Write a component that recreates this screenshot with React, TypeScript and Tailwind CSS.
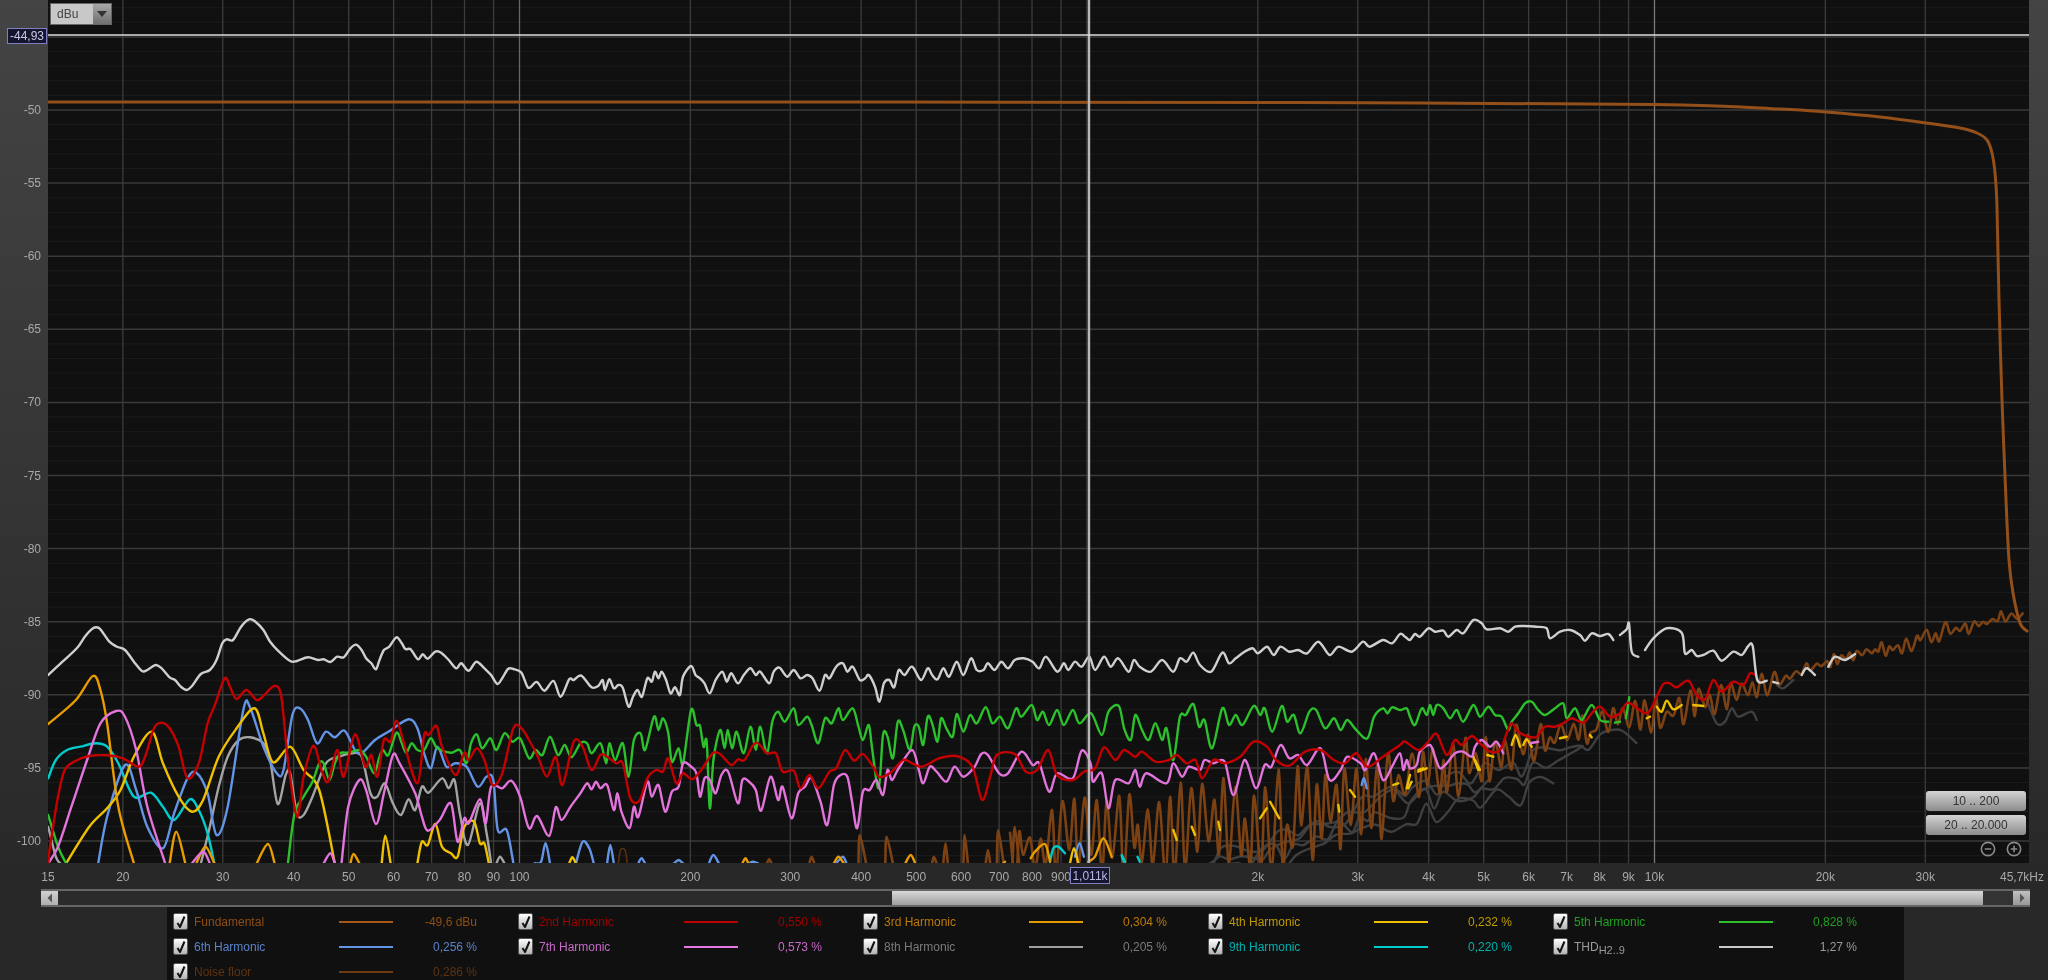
import React from "react";
import { CircleMinus, CirclePlus } from "lucide-react";

type P = [number, number];
const conv = (fx: (x: number) => number, fy: (y: number) => number) => (...n: number[]): P[] => {
  const r: P[] = [];
  for (let i = 0; i < n.length; i += 2) r.push([fx(n[i]), fy(n[i + 1])]);
  return r;
};
const z5 = conv((x) => x / 2.24, (y) => 600 + y / 3);
const z6 = conv((x) => 700 + x / 2.24, (y) => 600 + y / 3);
const z8 = conv((x) => 1000 + x / 3, (y) => 720 + y / 3);
const z9 = conv((x) => 1400 + x / 3, (y) => 610 + y / 3);

const smooth = (p: P[]) => {
  if (p.length < 2) return "";
  let d = `M${p[0][0].toFixed(1)} ${p[0][1].toFixed(1)}`;
  for (let i = 0; i < p.length - 1; i++) {
    const a = p[Math.max(i - 1, 0)], b = p[i], c = p[i + 1], e = p[Math.min(i + 2, p.length - 1)];
    const k = 0.16;
    d += `C${(b[0] + (c[0] - a[0]) * k).toFixed(1)} ${(b[1] + (c[1] - a[1]) * k).toFixed(1)} ${(c[0] - (e[0] - b[0]) * k).toFixed(1)} ${(c[1] - (e[1] - b[1]) * k).toFixed(1)} ${c[0].toFixed(1)} ${c[1].toFixed(1)}`;
  }
  return d;
};

const rng = (seed: number) => () => {
  seed = (seed * 1664525 + 1013904223) % 4294967296;
  return seed / 4294967296;
};
const interp = (t: P[], x: number) => {
  if (x <= t[0][0]) return t[0][1];
  for (let i = 0; i < t.length - 1; i++) {
    if (x <= t[i + 1][0]) {
      const f = (x - t[i][0]) / (t[i + 1][0] - t[i][0]);
      return t[i][1] + (t[i + 1][1] - t[i][1]) * f;
    }
  }
  return t[t.length - 1][1];
};

const white: P[][] = [
  [
    ...z5(108,225,140,185,172,145,190,110,205,88,215,82,225,88,245,125,262,140,280,150,300,185,318,213,330,210,348,195,362,205,380,232,392,240,405,260,418,270,430,258,450,222,470,210,485,180,498,130,508,118,522,120,540,80,558,58,572,65,590,90,605,125,625,155,650,183,665,183,690,172,712,180,725,178,740,186,755,170,770,172,785,145,798,134,810,150,820,175,832,190,842,208,850,180,860,150,872,140,888,112,900,130,908,147,920,148,936,178,947,163,958,176,975,155,988,158,1005,180,1022,205,1033,190,1050,212,1067,185,1085,205,1100,225,1114,252,1125,235,1138,207,1150,207,1168,218,1183,263,1198,248,1205,248,1220,272,1240,243,1256,290,1275,238,1285,240,1302,227,1325,262,1340,258,1350,240,1355,270,1365,238,1375,265,1385,255,1395,263,1408,320,1418,290,1428,270,1438,290,1450,235,1460,245,1467,215,1475,235,1482,215,1492,240,1502,280,1512,262,1523,285,1530,230,1548,198,1558,225),
    ...z6(0,235,10,250,22,280,35,240,50,215,60,245,70,220,85,250,98,225,113,205,125,225,135,215,155,250,165,215,178,203,195,230,210,210,225,235,240,225,252,235,268,272,280,225,290,235,305,200,320,190,330,215,342,200,358,240,370,235,378,225,392,260,402,305,412,250,424,240,435,262,445,210,458,225,475,200,495,240,510,205,520,225,532,238,545,205,558,230,575,185,590,225,607,175,620,210,635,210,645,190,660,210,675,185,690,205,705,180,725,175,745,185,760,205,775,170,800,215,815,190,825,210,840,185,855,200,872,170,885,210,905,170,920,200,937,175,960,215,972,180,985,200,1010,215,1035,180,1060,215,1075,175,1090,185,1105,158,1120,195,1145,215,1170,158,1185,190,1200,175,1220,155,1238,145,1250,160,1270,140,1285,165,1300,140,1320,155,1340,150,1360,160,1385,125,1410,165,1430,140,1460,155,1485,125,1500,140,1530,120,1550,130),
    ...z9(0,72,15,80,30,90,45,72,60,80,85,55,105,65,130,62,145,80,170,60,190,70,220,30,245,40,260,58,300,55,325,65,345,50,370,48,410,50,440,55,450,85,480,65,510,60,540,75,555,92,575,70,600,78,625,72,640,90),
  ],
  z9(660,75,680,58,687,40,695,125,715,140),
  z9(735,120,760,85,800,55,845,68,855,130,875,120,890,138,910,135,940,122,965,152,1000,125,1025,135,1045,108,1058,108,1072,210,1100,212),
  z9(1120,216,1135,220),
  z9(1205,195,1220,175,1245,195),
  z9(1285,170,1305,140,1335,150,1365,132),
];

const green: P[][] = [
  z5(108,645,130,740,148,790),
  [
    ...z5(645,790,660,640,680,590,700,545,715,490,725,490,738,540,750,490,762,460,780,458,805,450,820,470,838,520,850,470,858,450,870,465,888,398,900,430,910,458,922,430,935,450,950,450,965,415,980,445,1010,458,1030,450,1045,490,1055,430,1068,403,1080,445,1098,415,1112,450,1130,400,1148,425,1165,415,1185,475,1200,450,1215,465,1232,410,1250,465,1265,435,1280,472,1300,430,1315,430,1325,460,1345,430,1358,490,1365,430,1378,480,1395,430,1408,530,1420,420,1435,400,1445,450,1465,350,1475,390,1485,355,1497,400,1505,485,1520,445,1530,490,1548,330,1560,375),
    ...z6(0,378,8,440,15,425,22,625,30,480,45,390,55,445,62,390,72,445,82,395,98,460,113,380,125,450,135,380,150,460,162,365,175,335,190,365,210,325,220,375,240,350,250,375,265,430,280,355,295,370,310,325,320,360,342,325,355,380,365,420,378,375,385,440,400,565,410,405,420,410,432,475,443,365,455,390,470,450,480,380,490,380,500,435,510,350,520,370,532,425,540,355,552,385,566,410,575,342,590,395,605,345,620,370,640,322,655,370,672,350,690,385,708,325,720,350,743,315,755,360,768,335,782,375,800,330,815,375,835,330,850,370,876,340,900,405,915,335,938,318,950,385,965,420,975,345,990,390,1005,420,1020,370,1035,420,1045,385,1060,480,1075,350,1088,345,1105,312,1118,380,1130,360,1147,445,1170,325,1185,375,1200,345,1215,375,1240,318,1255,345,1265,325,1282,395,1303,318,1315,365,1330,345,1345,400,1365,335,1380,330,1400,385,1420,355,1435,390,1450,360,1470,390,1495,415,1510,350,1530,325,1540,340,1550,322),
    ...z9(0,300,20,295,30,320,45,345,65,295,80,315,90,285,100,315,110,285,130,295,150,325,170,300,190,335,220,285,240,320,265,290,285,315,305,320,325,360,335,335,355,310,375,280,395,275,415,300,435,315,465,295,490,280,500,325,525,295,545,330,575,285,600,330,625,335),
  ],
  z9(645,338,660,335),
  z9(678,325,688,262),
];

const red: P[][] = [
  [
    ...z5(108,790,112,740,130,590,145,510,170,482,200,468,240,466,275,475,310,500,325,470,345,385,362,368,380,385,400,440,420,535,445,490,465,370,480,320,503,235,515,260,530,297,552,270,575,300,592,285,615,258,630,290,645,480,665,650,680,530,702,437,720,510,735,545,755,450,770,530,795,403,818,500,832,465,845,530,860,420,875,425,888,362,905,430,935,550,950,405,960,405,978,378,990,440,1020,525,1040,458,1050,480,1068,445,1085,480,1103,555,1125,520,1150,385,1168,385,1185,420,1205,470,1225,530,1245,470,1260,555,1285,425,1305,440,1325,510,1345,465,1360,470,1380,490,1395,490,1412,595,1432,602,1450,535,1470,510,1485,515,1497,475,1515,550,1530,520,1550,538),
    ...z6(0,515,15,485,30,458,45,462,70,495,85,478,100,480,125,428,150,460,170,460,185,515,210,512,225,565,245,525,265,565,290,515,305,505,325,450,345,482,365,462,390,505,400,530,425,520,455,480,475,490,495,500,515,490,535,475,575,468,610,500,632,600,650,530,665,465,705,462,730,515,755,510,780,450,800,525,835,540,860,515,885,505,905,442,930,480,950,450,975,470,990,455,1020,485,1050,480,1068,465,1090,490,1110,480,1125,535,1150,480,1175,490,1210,470,1240,425,1270,440,1290,480,1320,497,1355,455,1390,450,1420,480,1445,490,1470,460,1495,500,1530,470),
    ...z9(0,405,15,395,55,420,85,395,110,372,140,435,165,390,185,405,215,378,240,400,270,425,300,420,320,370,335,340,355,365,385,380,410,380,435,350,465,350,490,340,515,325,550,338,575,310,600,290,630,320,660,310,685,278,740,310,770,260,790,222,810,220,830,232,865,212,890,255,915,268,940,210,965,245,1000,215,1030,225,1050,190,1065,195),
  ],
];

const pink: P[][] = [
  z5(108,790,130,740,160,620,195,480,225,370,260,333,280,350,305,450,330,620,370,790),
  z5(430,790,455,755,470,790),
  z5(725,790,740,760,750,790),
  [
    ...z5(765,790,780,620,805,540,820,570,842,672,860,580,880,465,895,490,930,580,945,650,958,692,985,660,1010,610,1025,725,1040,655,1050,670,1075,598,1088,670,1100,560,1125,565,1145,542,1165,590,1185,685,1203,648,1230,708,1245,622,1258,660,1278,620,1300,580,1315,550,1325,568,1335,545,1345,565,1360,555,1375,630,1383,580,1392,635,1410,685,1420,620,1430,650,1450,545,1460,590,1475,555,1490,635,1505,575,1520,560,1530,490,1548,500,1560,520),
    ...z6(0,590,10,535,22,540,35,580,48,525,63,515,85,610,95,540,110,545,125,570,137,632,158,530,175,600,185,560,205,655,220,580,235,560,250,535,270,605,285,675,300,555,315,525,330,530,340,600,352,685,365,575,380,570,395,540,410,585,420,510,430,540,445,505,475,450,490,510,500,550,515,500,530,515,552,545,570,500,590,530,615,500,630,462,645,465,670,520,690,520,720,455,745,495,760,490,782,575,800,520,835,535,855,452,875,490,880,545,900,520,915,625,930,540,960,550,975,510,985,560,1000,520,1045,550,1060,490,1080,530,1095,500,1120,510,1130,480,1150,490,1175,485,1195,585,1220,480,1245,565,1265,495,1280,500,1300,435,1320,475,1340,465,1360,495,1390,445,1410,540,1435,510,1450,470,1480,490,1490,510,1510,460,1530,540,1550,500),
    ...z9(0,430,10,480,20,450,30,475,50,465,60,425,90,405,105,440,120,475,140,460,165,430,190,425,215,440,225,410,245,390,270,410,290,395,310,430),
  ],
  z9(390,400,415,395),
];

const cyan: P[][] = [
  z5(108,535,125,480,150,450,180,440,215,430,240,440,265,490,300,590,338,578,365,620,390,660,425,598,445,630,465,700,480,790),
  z8(150,425,160,385,175,380,195,400),
  z6(945,770,950,785),
  z6(980,770,985,785),
  z8(365,405,375,425),
];

const blue: P[][] = [
  z5(220,790,240,650,280,495,305,570,330,680,365,745,390,640,420,535,440,518,465,580,485,705,510,620,545,330,560,322,590,440,620,520,635,510,655,345,672,325,690,360,710,430,730,395,750,412,772,392,795,450,810,460,840,420,870,395,915,358,935,385,950,460,965,505,980,440,1000,500,1020,490,1045,500,1070,560,1090,530,1105,540,1115,690,1135,690,1150,790),
  z5(1198,790,1212,785,1222,730,1232,790),
  z5(1290,790,1305,725,1320,745,1330,790),
  z5(1360,790,1367,735,1375,790),
  z5(1430,790,1437,775,1445,790),
  z5(1510,790,1520,780,1530,790),
  z6(20,790,30,765,42,790),
  z6(110,790,118,785,130,790),
  z6(305,790,320,770,328,790),
  z6(840,770,850,730,860,770),
  z8(1085,195,1092,175,1100,205),
];

const yellow: P[][] = [
  z5(148,790,200,680,240,625,270,570,300,470,340,395,365,490,400,590,430,635,455,600,490,470,530,385,570,325,590,400,612,487,650,440,680,510,715,570,750,790),
  z5(855,790,863,707,875,790),
  z5(935,790,945,725,958,735,975,672,990,740,1010,760,1025,770,1040,680,1062,665,1075,730,1085,730,1095,790),
  z5(1275,790,1282,772,1290,790),
  z8(210,430,222,385,235,430),
  z9(20,535,30,495),
  z9(55,480,70,475),
  z9(220,440,235,480),
  z9(262,435,280,440),
  z9(335,405,347,375,360,410),
  z9(370,405,380,388,395,410),
  z9(480,385,500,380),
  z9(570,375,575,382),
  z9(740,325,750,320),
  z9(770,290,785,305,800,272,820,298,845,285),
  z9(880,285,910,288),
  z8(520,330,530,360),
  z8(575,320,585,345),
  z8(655,305,660,330),
  z8(780,295,800,265),
  z8(810,245,838,295),
  z8(1015,255,1018,275),
  z8(1050,210,1065,230),
  z8(1180,195,1195,190),
  z8(1225,205,1235,185),
  z8(1255,155,1280,145),
  z8(1425,120,1440,150),
];

const orange: P[][] = [
  z5(108,372,170,300,208,228,225,270,240,370,265,620,300,790),
  z5(380,790,395,695,415,790),
  z5(440,790,460,740,480,790),
  z5(575,790,600,732,615,790),
  z5(785,790,792,762,805,790),
  z6(95,790,102,775,108,790),
  z6(300,790,310,770,322,790),
  z6(460,790,472,765,482,790),
  z8(92,415,105,395,135,372,150,425),
  z8(265,425,285,410,310,355,335,410),
  z8(10,430,15,425),
];

const gray8: P[][] = [
  z5(108,680,125,770,135,790),
  z5(450,790,470,680,490,560,510,470,535,420,560,412,590,430,605,480,622,612,640,525,650,520,665,640,680,645,700,590,730,490,760,470,790,460,810,470,830,580,845,590,862,550,880,610,898,645,915,598,930,630,945,560,960,578,990,535,1005,565,1018,540,1030,640,1048,735,1075,610,1090,700,1100,790),
  z5(1112,790,1120,770,1130,790),
];

const brownEnvTop: P[] = [[1000, 830], [1040, 800], [1180, 782], [1270, 768], [1350, 762], [1450, 738], [1500, 728], [1600, 708], [1650, 696], [1700, 686], [1750, 676], [1800, 664]];
const brownEnvBot: P[] = [[1000, 885], [1100, 885], [1270, 872], [1350, 850], [1400, 835], [1450, 805], [1500, 778], [1600, 744], [1700, 726], [1760, 706], [1800, 688]];
const brownLine: P[] = [[1780, 680], [1813, 667], [1857, 654], [1893, 648], [1917, 640], [1953, 630], [1997, 620], [2027, 616]];

const makeBrown = () => {
  const r = rng(7);
  const out: P[] = [];
  let up = true;
  for (let x = 1010; x < 1790; x += 3.5 + r() * 3.5) {
    const t = interp(brownEnvTop, x), b = interp(brownEnvBot, x);
    const v = up ? r() * r() * 0.75 : 0.55 + r() * 0.45;
    out.push([x, t + (b - t) * v]);
    up = !up;
  }
  for (let x = 1790; x <= 2027; x += 3 + r() * 3.5) {
    const c = interp(brownLine, x);
    out.push([x, c + (up ? -1 : 1) * (1 + r() * r() * 10)]);
    up = !up;
  }
  return out;
};

const makeDark = (seed: number, off: number, from: number, to: number) => {
  const r = rng(seed);
  const base: P[] = [[1150, 885], [1300, 832], [1400, 792], [1500, 772], [1600, 738], [1700, 722], [1760, 712]];
  const out: P[] = [];
  for (let x = from; x <= to; x += 7 + r() * 9) {
    out.push([x, interp(base, x) + off + (r() - 0.5) * 26]);
  }
  return out;
};

const fundamental: P[] = [[48, 102], [400, 102], [900, 102], [1300, 102.5], [1655, 104.5], [1780, 109], [1826, 112], [1880, 117], [1926, 123], [1960, 128], [1977, 133], [1987, 140], [1992, 153], [1995, 173], [1997, 207], [1999, 300], [2002, 400], [2006, 500], [2009, 560], [2013, 593], [2020, 623], [2027, 631]];

const lowBrown: P[][] = [
  z6(355,790,358,705,372,790),
  z6(415,790,418,710,432,790),
  z6(245,790,250,770,256,790),
  z6(520,790,524,770,530,790),
  z6(545,790,550,730,555,790),
  z6(590,790,593,705,600,790),
  z6(640,790,645,750,650,790),
  z6(665,790,668,690,680,790),
  z6(700,790,705,680,715,790),
  z6(150,790,155,778,160,790),
];

const xf = (f: number) => 519.5 + 567.5 * Math.log10(f / 100);
const yf = (db: number) => 110 + (-50 - db) * 14.62;

const ticks: number[] = [];
[10, 100, 1000, 10000].forEach((d) => {
  for (let i = 1; i <= 9; i++) {
    const f = i * d;
    if (f >= 20 && f <= 30000) ticks.push(f);
  }
});

const xLabels: [string, number][] = [
  ["15", 48],
  ...[20, 30, 40, 50, 60, 70, 80, 90, 100, 200, 300, 400, 500, 600, 700, 800, 900].map((f) => [String(f), xf(f)] as [string, number]),
  ...[2, 3, 4, 5, 6, 7, 8, 9, 10, 20, 30].map((k) => [`${k}k`, xf(k * 1000)] as [string, number]),
  ["45,7kHz", 2022],
];

const Curves = ({ list, color, w = 2.4 }: { list: P[][]; color: string; w?: number }) => (
  <g fill="none" stroke={color} strokeWidth={w} strokeLinejoin="round" strokeLinecap="round">
    {list.map((p, i) => (
      <path key={i} d={smooth(p)} />
    ))}
  </g>
);

const Chart = () => {
  const dbs: number[] = [];
  for (let d = -42; d >= -102; d--) dbs.push(d);
  return (
    <svg className="absolute inset-0" width={1981} height={863} viewBox="48 0 1981 863">
      {dbs.map((d) => (
        <line key={d} x1={48} x2={2029} y1={yf(d)} y2={yf(d)} stroke={d % 5 === 0 ? "#3a3a3a" : "#1b1b1b"} strokeWidth={d % 5 === 0 ? 1.5 : 1} />
      ))}
      {ticks.map((f) => (
        <line key={f} x1={xf(f)} x2={xf(f)} y1={0} y2={863} stroke={f === 100 ? "#666666" : f === 10000 ? "#7a7a7a" : "#3c3c3c"} strokeWidth={1.3} />
      ))}
      <Curves list={[makeDark(3, 0, 1170, 1640), makeDark(11, 14, 1230, 1590), makeDark(23, 28, 1260, 1560), makeDark(37, 8, 1200, 1500)]} color="#3f3f3f" />
      <Curves list={[z9(920,270,950,340,975,335,995,295,1015,320,1055,305,1070,330), z9(1130,225,1150,235,1180,210)]} color="#3f3f3f" />
      <Curves list={gray8} color="#a4a4a4" />
      <Curves list={[makeBrown(), ...lowBrown]} color="#7c4214" w={2.6} />
      <Curves list={[z5(1385,790,1390,750,1400,750,1405,790)]} color="#5a3010" w={1.6} />
      <Curves list={cyan} color="#00cccc" />
      <Curves list={blue} color="#6494e6" />
      <Curves list={yellow} color="#efc000" />
      <Curves list={orange} color="#e89c00" />
      <Curves list={green} color="#2cc02c" />
      <Curves list={pink} color="#e274dc" />
      <Curves list={red} color="#c40000" />
      <Curves list={white} color="#cfcfcf" />
      <Curves list={[fundamental]} color="#94501a" w={3} />
      <line x1={1089} x2={1089} y1={0} y2={863} stroke="#b8b8b8" strokeWidth={2.4} />
      <line x1={48} x2={2029} y1={35} y2={35} stroke="#dcdcdc" strokeWidth={1.6} />
    </svg>
  );
};

const legend: { name: React.ReactNode; text: string; line: string; value: string }[] = [
  { name: "Fundamental", text: "text-[#8f4e14]", line: "bg-[#a5581a]", value: "-49,6 dBu" },
  { name: "2nd Harmonic", text: "text-[#a00000]", line: "bg-[#c00000]", value: "0,550 %" },
  { name: "3rd Harmonic", text: "text-[#bb7a05]", line: "bg-[#e59a00]", value: "0,304 %" },
  { name: "4th Harmonic", text: "text-[#bf9a00]", line: "bg-[#eec000]", value: "0,232 %" },
  { name: "5th Harmonic", text: "text-[#22a022]", line: "bg-[#2cc02c]", value: "0,828 %" },
  { name: "6th Harmonic", text: "text-[#5a82c8]", line: "bg-[#6494e6]", value: "0,256 %" },
  { name: "7th Harmonic", text: "text-[#c868c8]", line: "bg-[#e678e0]", value: "0,573 %" },
  { name: "8th Harmonic", text: "text-[#7a7a7a]", line: "bg-[#a0a0a0]", value: "0,205 %" },
  { name: "9th Harmonic", text: "text-[#00b0b0]", line: "bg-[#00cccc]", value: "0,220 %" },
  {
    name: (
      <span className="flex items-start">
        THD<span className="mt-[6px] text-[11px] leading-[12px]">H2..9</span>
      </span>
    ),
    text: "text-[#9a9a9a]",
    line: "bg-[#c8c8c8]",
    value: "1,27 %",
  },
  { name: "Noise floor", text: "text-[#5e3412]", line: "bg-[#6e3a12]", value: "0,286 %" },
];

const Check = () => (
  <span className="flex h-[17px] w-[15px] shrink-0 items-center justify-center rounded-[2px] border border-[#555] bg-linear-to-b from-[#ffffff] to-[#b4b4b4]">
    <svg width="12" height="14" viewBox="0 0 12 14" fill="none">
      <path d="M2.5 8 L5 12 L9.5 1.5" stroke="#111" strokeWidth="2" strokeLinejoin="round" />
    </svg>
  </span>
);

const Arrow = ({ dir }: { dir: "l" | "r" }) => (
  <svg width="6" height="10" viewBox="0 0 6 10">
    <path d={dir === "l" ? "M5 0.5 L0.5 5 L5 9.5 Z" : "M1 0.5 L5.5 5 L1 9.5 Z"} fill="#555" />
  </svg>
);

export default function App() {
  const ylabels = [-50, -55, -60, -65, -70, -75, -80, -85, -90, -95, -100];
  return (
    <div className="flex h-[980px] w-[2048px] flex-col overflow-hidden bg-[#282828] font-['Liberation_Sans',sans-serif] text-[12px] blur-[0.4px]">
      <div className="flex h-[863px] bg-linear-to-b from-[#444444] to-[#292929]">
        <div className="relative w-[48px] shrink-0 text-[#a8a8a8]">
          {ylabels.map((d) => (
            <span key={d} className="absolute right-[7px] leading-[14px]" style={{ top: yf(d) - 7 }}>
              {d}
            </span>
          ))}
          <span className="absolute left-[7px] top-[28px] flex h-[16px] w-[40px] items-center justify-center border border-[#7f7fc4] bg-[#15152e] text-[#c8c8e8]">
            -44,93
          </span>
        </div>
        <div className="relative flex-1 bg-[#101010]">
          <Chart />
          <div className="absolute left-[2px] top-[3px] flex h-[22px] w-[62px] border border-[#666]">
            <span className="flex flex-1 items-center pl-[6px] bg-[#c8c8c8] text-[#444]">dBu</span>
            <span className="flex w-[18px] items-center justify-center bg-linear-to-b from-[#a8a8a8] to-[#707070]">
              <svg width="10" height="6" viewBox="0 0 10 6">
                <path d="M0 0 H10 L5 6 Z" fill="#333" />
              </svg>
            </span>
          </div>
          <div className="absolute bottom-[6px] right-[3px] flex flex-col items-center gap-[4px]">
            <button className="h-[20px] w-[100px] rounded-[3px] bg-linear-to-b from-[#d4d4d4] to-[#8c8c8c] text-[#333]">10 .. 200</button>
            <button className="h-[20px] w-[100px] rounded-[3px] bg-linear-to-b from-[#d4d4d4] to-[#8c8c8c] text-[#333]">20 .. 20.000</button>
            <div className="mt-[2px] flex w-full justify-end gap-[10px] pr-[4px] text-[#8a8a8a]">
              <CircleMinus size={16} strokeWidth={2.4} />
              <CirclePlus size={16} strokeWidth={2.4} />
            </div>
          </div>
        </div>
        <div className="w-[19px] shrink-0" />
      </div>

      <div className="relative h-[26px] shrink-0 text-[#a8a8a8]">
        {xLabels.map(([t, x]) => (
          <span key={t} className="absolute top-[7px] -translate-x-1/2 leading-[14px]" style={{ left: x }}>
            {t}
          </span>
        ))}
        <span className="absolute left-[1070px] top-[4px] flex h-[17px] w-[40px] items-center justify-center border border-[#7f7fc4] bg-[#15152e] text-[#b8b8e0]">
          1,011k
        </span>
      </div>

      <div className="ml-[41px] mr-[18px] flex h-[18px] shrink-0 border-y-2 border-[#666]">
        <span className="flex w-[17px] items-center justify-center bg-linear-to-b from-[#d0d0d0] to-[#b0b0b0]">
          <Arrow dir="l" />
        </span>
        <span className="w-[834px] bg-[#2b2b2b]" />
        <span className="w-[1091px] bg-linear-to-b from-[#d8d8d8] to-[#a0a0a0]" />
        <span className="w-[30px] bg-[#333]" />
        <span className="flex w-[17px] items-center justify-center bg-linear-to-b from-[#c0c0c0] to-[#999]">
          <Arrow dir="r" />
        </span>
      </div>

      <div className="ml-[167px] grid h-[73px] w-[1737px] grid-cols-[repeat(5,345px)] content-start bg-[#101010] pl-[6px] pt-[2px]">
        {legend.map((l, i) => (
          <div key={i} className={`flex h-[25px] items-center ${l.text}`}>
            <Check />
            <span className="ml-[6px] w-[145px] whitespace-nowrap">{l.name}</span>
            <span className={`h-[2px] w-[54px] ${l.line}`} />
            <span className="w-[84px] text-right">{l.value}</span>
          </div>
        ))}
      </div>
    </div>
  );
}
